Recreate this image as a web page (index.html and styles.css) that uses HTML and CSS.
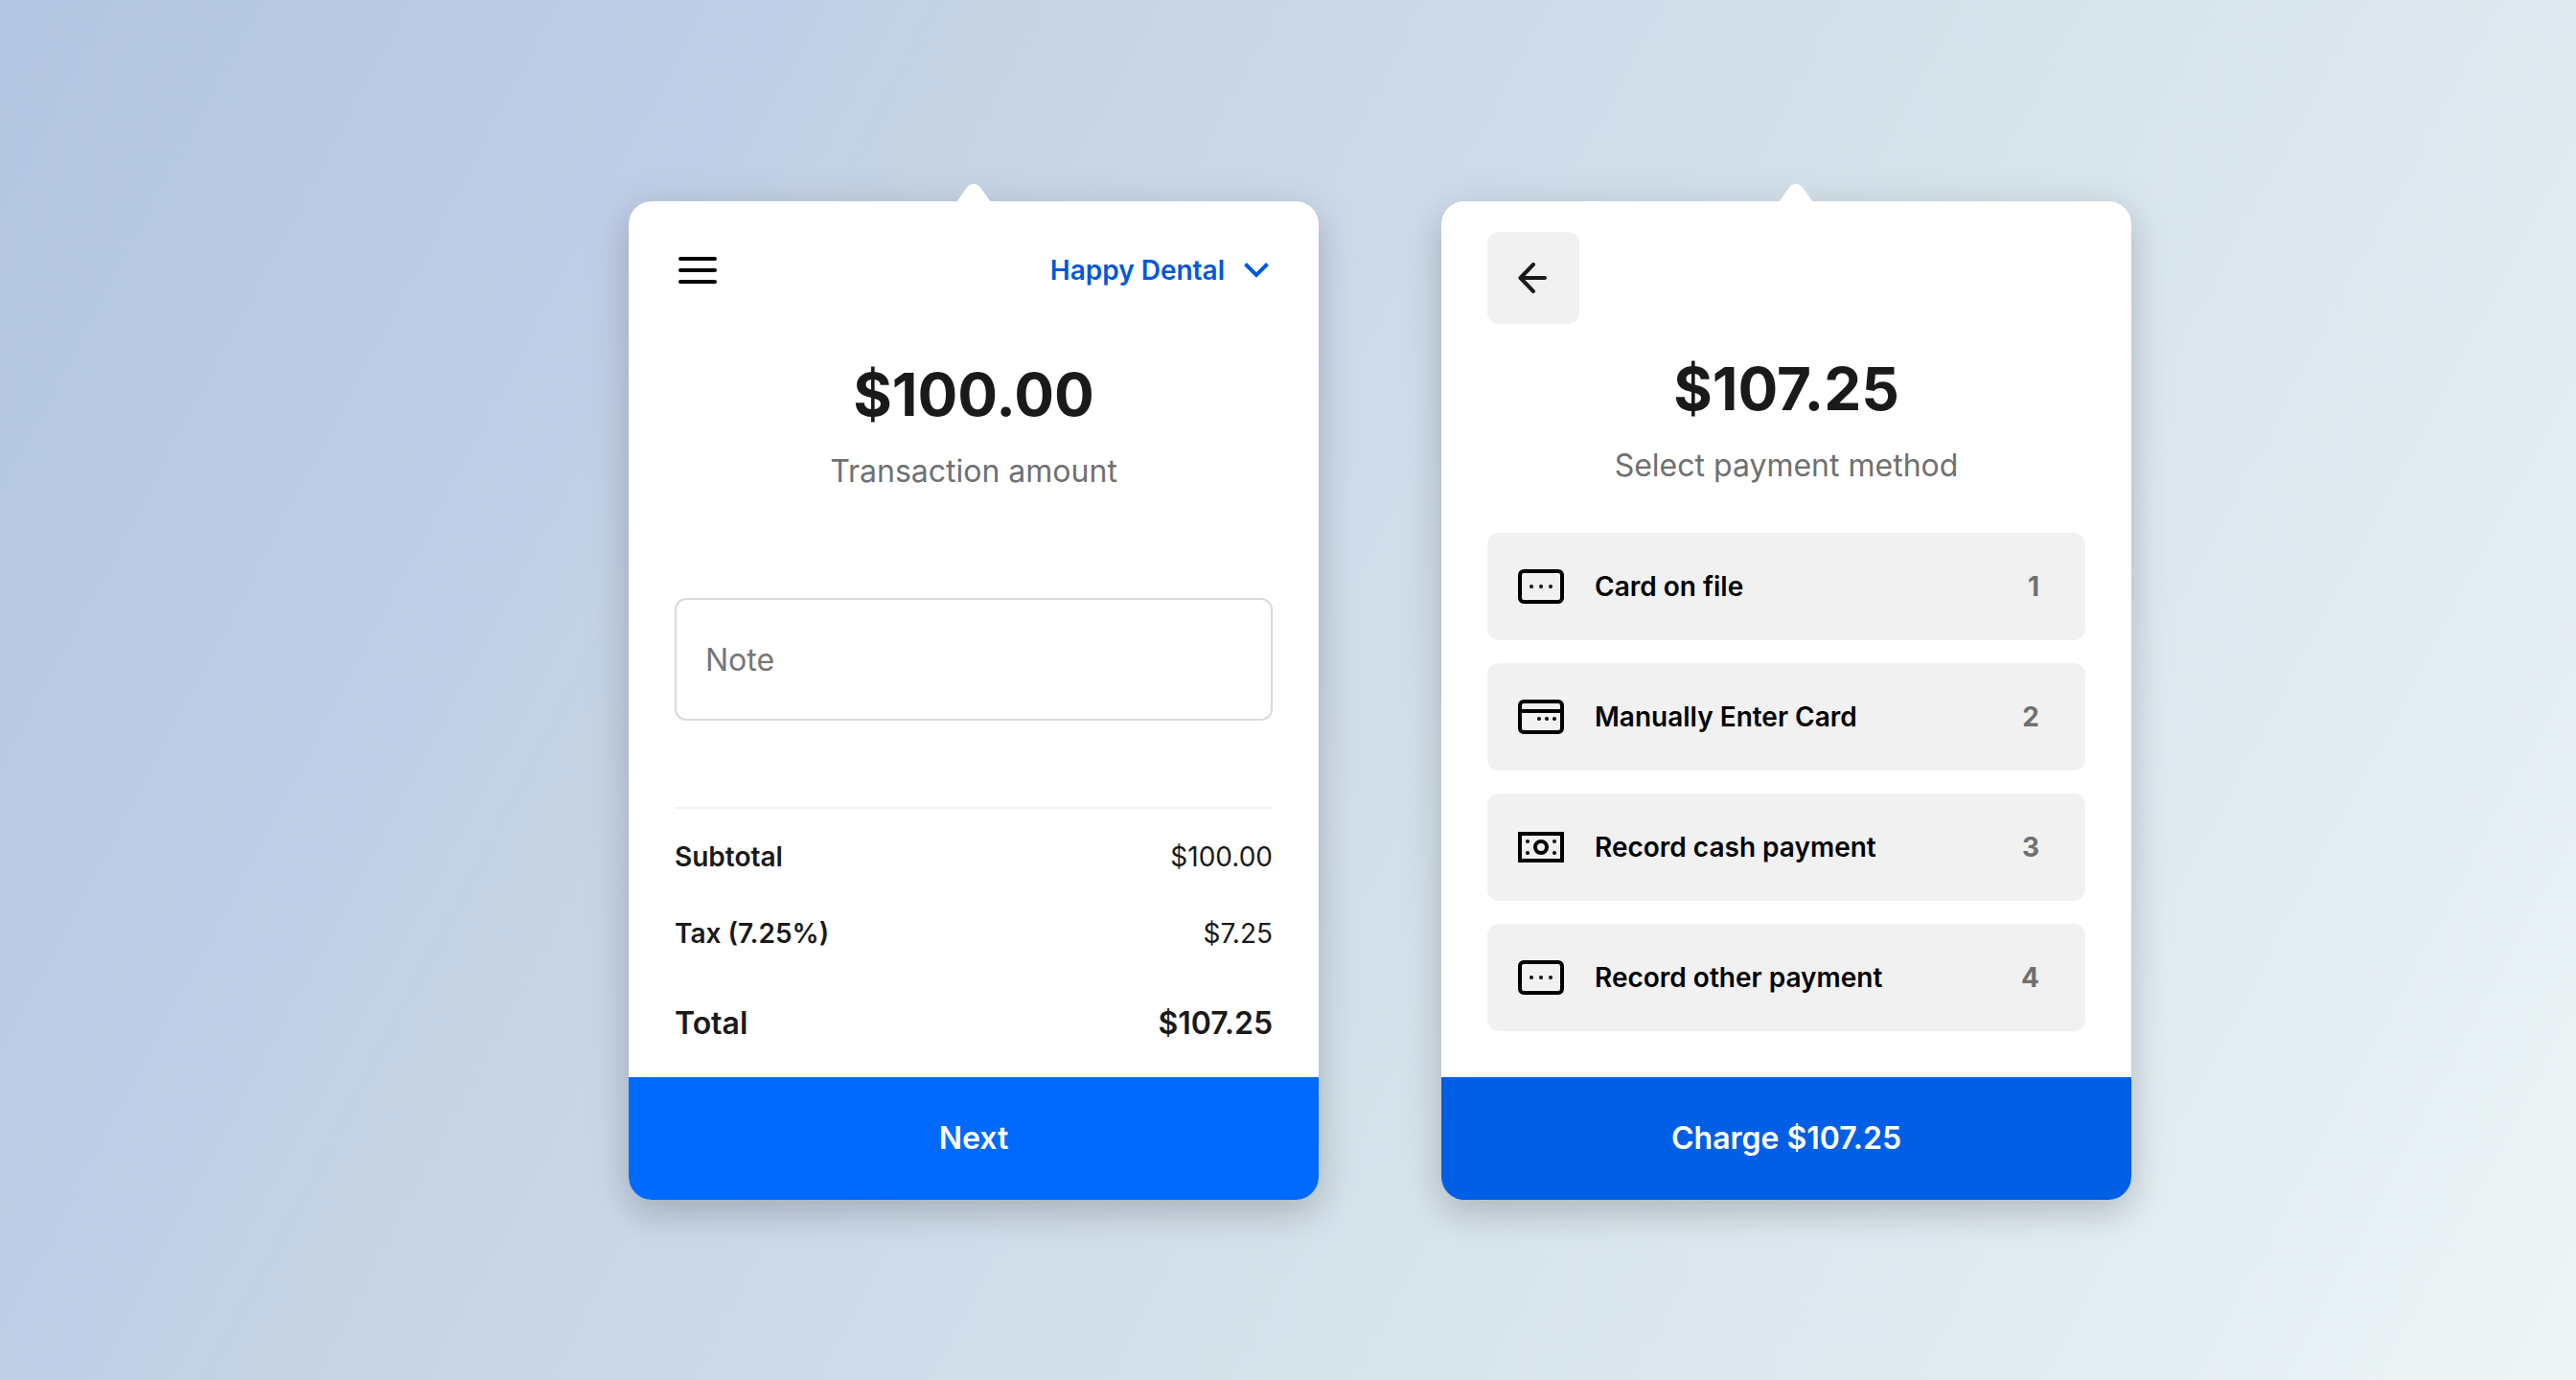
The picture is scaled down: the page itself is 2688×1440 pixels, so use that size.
FILE: index.html
```html
<!DOCTYPE html>
<html lang="en">
<head>
<meta charset="utf-8">
<meta name="viewport" content="width=device-width, initial-scale=1">
<title>Take a payment</title>
<link rel="stylesheet" href="styles.css">
</head>
<body>
<main class="stage">
  <section class="card" aria-label="Transaction">
    <svg class="card-tip" viewBox="0 0 36 19" aria-hidden="true"><path d="M0 19 11 3.500Q13.500 0 18 0Q22.500 0 25 3.500L36 19Z"/></svg>
    <div class="card-body">
      <header class="card-head">
        <button class="icon-button" type="button" aria-label="Menu">
          <svg class="icon-menu" viewBox="0 0 40 28"><path d="M2 2h36M2 14h36M2 26h36"/></svg>
        </button>
        <button class="business" type="button">Happy Dental
          <svg class="icon-chevron" viewBox="0 0 26 16"><path d="M1.500 1.500 13 13 24.500 1.500"/></svg>
        </button>
      </header>
      <h1 class="amount">$100.00</h1>
      <p class="caption">Transaction amount</p>
      <input class="note" type="text" placeholder="Note" aria-label="Note">
      <dl class="summary">
        <div class="line"><dt>Subtotal</dt><dd>$100.00</dd></div>
        <div class="line"><dt>Tax (7.25%)</dt><dd>$7.25</dd></div>
        <div class="line total"><dt>Total</dt><dd>$107.25</dd></div>
      </dl>
    </div>
    <button class="action" type="button">Next</button>
  </section>

  <section class="card" aria-label="Payment method">
    <svg class="card-tip tip-offset" viewBox="0 0 36 19" aria-hidden="true"><path d="M0 19 11 3.500Q13.500 0 18 0Q22.500 0 25 3.500L36 19Z"/></svg>
    <div class="card-body">
      <header class="card-head card-head-back">
        <button class="back" type="button" aria-label="Back">
          <svg class="icon-back" viewBox="0 0 32 32"><path d="M16 2 2.500 16 16 30M3 16h25"/></svg>
        </button>
      </header>
      <h1 class="amount">$107.25</h1>
      <p class="caption">Select payment method</p>
      <ul class="methods">
        <li><button class="method" type="button">
          <svg class="icon-method" viewBox="0 0 48 36"><rect x="2" y="2" width="44" height="32" rx="4"/><g class="dots"><circle cx="14" cy="18" r="2"/><circle cx="24" cy="18" r="2"/><circle cx="34" cy="18" r="2"/></g></svg>
          <span class="method-name">Card on file</span><span class="method-key">1</span>
        </button></li>
        <li><button class="method" type="button">
          <svg class="icon-method" viewBox="0 0 48 36"><rect x="2" y="2" width="44" height="32" rx="4"/><path d="M2 12h44"/><g class="dots"><circle cx="22" cy="20" r="2"/><circle cx="30" cy="20" r="2"/><circle cx="38" cy="20" r="2"/></g></svg>
          <span class="method-name">Manually Enter Card</span><span class="method-key">2</span>
        </button></li>
        <li><button class="method" type="button">
          <svg class="icon-method" viewBox="0 0 48 36"><rect x="2" y="4" width="44" height="28"/><circle cx="24" cy="18" r="6"/><g class="dots"><circle cx="10" cy="12" r="2"/><circle cx="38" cy="12" r="2"/><circle cx="10" cy="24" r="2"/><circle cx="38" cy="24" r="2"/></g></svg>
          <span class="method-name">Record cash payment</span><span class="method-key">3</span>
        </button></li>
        <li><button class="method" type="button">
          <svg class="icon-method" viewBox="0 0 48 36"><rect x="2" y="2" width="44" height="32" rx="4"/><g class="dots"><circle cx="14" cy="18" r="2"/><circle cx="24" cy="18" r="2"/><circle cx="34" cy="18" r="2"/></g></svg>
          <span class="method-name">Record other payment</span><span class="method-key">4</span>
        </button></li>
      </ul>
    </div>
    <button class="action action-hover" type="button">Charge $107.25</button>
  </section>
</main>
</body>
</html>
```
FILE: styles.css
```css
*, *::before, *::after { box-sizing: border-box; }

body {
  margin: 0;
  min-height: 100vh;
  background: linear-gradient(118deg, #b3c5e1 0%, #c0cfe7 24%, #c4d3e3 29%, #cddaea 45%, #d2dfea 54%, #d8e5ec 66%, #dfeaf0 78%, #e3edf2 86%, #edf5f5 100%);
  color: #1a1a1a;
  font-family: Inter, "Liberation Sans", sans-serif;
  font-size: 28px;
  line-height: 40px;
}

h1, p, dl, dd, ul { margin: 0; padding: 0; }

button {
  border: 0;
  padding: 0;
  background: none;
  color: inherit;
  font: inherit;
  font-weight: 600;
  cursor: pointer;
}

svg {
  display: block;
  fill: none;
  stroke: currentColor;
  stroke-width: 4px;
}

.stage {
  display: flex;
  flex-wrap: wrap;
  justify-content: center;
  gap: 128px;
  padding: 210px 0 188px 192px;
}

.card {
  position: relative;
  display: flex;
  flex-direction: column;
  width: 720px;
  border-radius: 24px;
  background: #fff;
  box-shadow: 0 8px 48px rgba(0, 0, 0, 0.12), 0 16px 32px rgba(0, 0, 0, 0.1);
}

.card-tip {
  position: absolute;
  bottom: 100%;
  left: 50%;
  width: 36px;
  height: 19px;
  margin: 0 0 -1px -18px;
  fill: #fff;
  stroke: none;
}

.tip-offset { margin-left: -8px; }

.card-body {
  flex: 1;
  display: flex;
  flex-direction: column;
  padding: 32px 48px 36px;
}

.card-head {
  display: flex;
  align-items: center;
  justify-content: space-between;
  height: 80px;
  margin-bottom: 50px;
}

.card-head-back {
  height: 96px;
  margin-bottom: 28px;
}

.icon-button {
  padding: 4px;
  color: #000;
}

.icon-menu {
  width: 40px;
  height: 28px;
  stroke-linecap: round;
}

.business {
  display: flex;
  align-items: center;
  gap: 20px;
  padding-right: 4px;
  color: #0058db;
}

.icon-chevron {
  width: 26px;
  height: 16px;
}

.back {
  display: grid;
  place-items: center;
  width: 96px;
  height: 96px;
  border-radius: 12px;
  background: #f1f1f1;
}

.icon-back {
  width: 32px;
  height: 32px;
  stroke-linecap: round;
  stroke-linejoin: round;
}

.amount {
  font-size: 62px;
  font-weight: 700;
  line-height: 80px;
  text-align: center;
}

.caption {
  margin-top: 20px;
  color: #707070;
  font-size: 32px;
  text-align: center;
}

.note {
  width: 100%;
  height: 128px;
  margin-top: 112px;
  padding: 0 30px;
  border: 2px solid #dadada;
  border-radius: 12px;
  background: #fff;
  color: inherit;
  font: inherit;
  font-size: 32px;
}

.note::placeholder { color: #767676; opacity: 1; }

.summary {
  display: flex;
  flex-direction: column;
  gap: 40px;
  margin-top: 90px;
  padding-top: 30px;
  border-top: 2px solid #f1f1f1;
}

.line {
  display: flex;
  justify-content: space-between;
}

.line dt { font-weight: 600; }

.total {
  margin-top: 14px;
  font-size: 32px;
}

.total dd { font-weight: 600; }

.methods {
  display: grid;
  gap: 24px;
  margin-top: 50px;
  list-style: none;
}

.method {
  display: flex;
  align-items: center;
  width: 100%;
  height: 112px;
  padding: 0 48px 0 32px;
  border-radius: 12px;
  background: #f1f1f1;
  color: #000;
  text-align: left;
}

.icon-method {
  width: 48px;
  height: 36px;
  margin-right: 32px;
}

.dots { fill: currentColor; stroke: none; }

.method-name { flex: 1; }

.method-key {
  color: #707070;
  font-weight: 700;
}

.action {
  height: 128px;
  border-radius: 0 0 24px 24px;
  background: #006aff;
  color: #fff;
  font-size: 32px;
}

.action-hover { background: #005fe5; }
```
